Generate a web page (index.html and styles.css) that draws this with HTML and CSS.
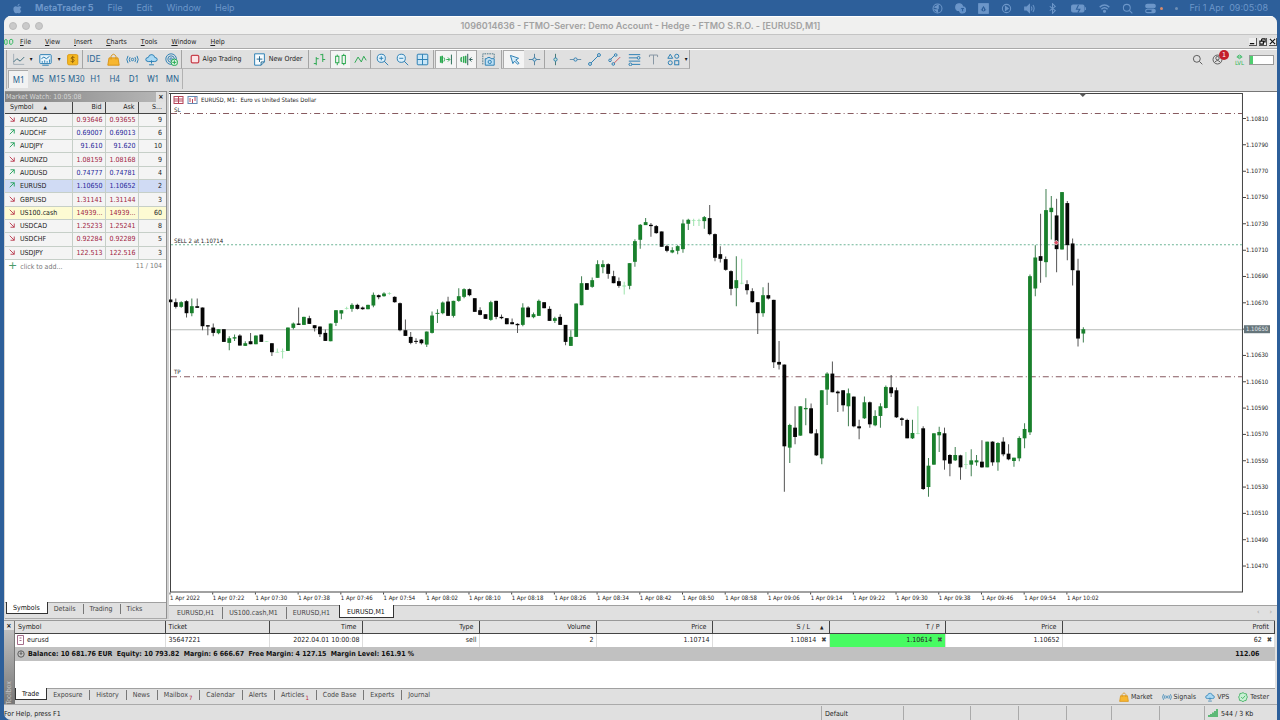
FILE: index.html
```html
<!DOCTYPE html>
<html lang="en">
<head>
<meta charset="utf-8">
<title>MetaTrader 5</title>
<link rel="stylesheet" href="styles.css">
</head>
<body>
<header class="macbar">
  <svg class="apple" viewBox="0 0 16 16"><path d="M11 1c0 2-1.400 3.200-3 3.200C8 2.500 9.500 1.200 11 1zM13.500 11.500c-1 2.500-2 3.500-3.200 3.500-.9 0-1.200-.5-2.300-.5s-1.500.5-2.300.5C4 15 2 11.500 2 8.700 2 6 3.700 4.700 5.300 4.700c1.100 0 2 .6 2.700.6s1.700-.7 3-.7c1 0 2 .5 2.600 1.400-2.300 1.400-2 4.500-.1 5.500z" fill="currentColor"/></svg>
  <nav class="macmenu"><b>MetaTrader 5</b><span>File</span><span>Edit</span><span>Window</span><span>Help</span></nav>
  <div class="macstatus">
    <svg viewBox="0 0 16 16" class="ic"><circle cx="8" cy="8" r="6.500"/><path d="M4 6l5-3v5zM4 10h4v3z" fill="currentColor"/></svg>
    <svg viewBox="0 0 16 16" class="ic"><circle cx="6" cy="6" r="5" fill="currentColor"/><circle cx="11" cy="10" r="4.500" fill="#5d8fca"/><path d="M9 8h4M11 8v4" stroke="#2d5f9a"/></svg>
    <svg viewBox="0 0 16 16" class="ic"><rect x="1" y="1" width="14" height="14" fill="currentColor"/><path d="M8 3l4 6a3.500 3.500 0 0 1-8 0z" fill="#2d5f9a"/><path d="M8 8v3" /></svg>
    <svg viewBox="0 0 16 16" class="ic"><circle cx="8" cy="8" r="6"/><path d="M6.500 5l4 3-4 3z" fill="currentColor"/></svg>
    <svg viewBox="0 0 16 16" class="ic"><path d="M1 6h3l4-4v12l-4-4H1z" fill="currentColor"/><path d="M10.500 5q2 3 0 6M13 3q3.500 5 0 10"/></svg>
    <svg viewBox="0 0 16 16" class="ic"><path d="M4 5l8 6-4 4V1l4 4-8 6"/></svg>
    <svg viewBox="0 0 24 16" class="ic batt"><rect x="2" y="3" width="18" height="10" rx="2" fill="currentColor"/><path d="M22 6v4"/><path d="M12 3l-3 6h5l-3 5" stroke="#2d5f9a"/></svg>
    <svg viewBox="0 0 16 16" class="ic"><path d="M1 6q7-6 14 0M3.500 9q4.500-4 9 0" stroke-width="2"/><circle cx="8" cy="12" r="1.500" fill="currentColor"/></svg>
    <svg viewBox="0 0 16 16" class="ic"><circle cx="7" cy="7" r="5"/><path d="M11 11l4 4"/></svg>
    <svg viewBox="0 0 16 16" class="ic"><rect x="1" y="2" width="14" height="5" rx="2.500" fill="currentColor"/><rect x="1" y="9" width="14" height="5" rx="2.500"/><circle cx="12" cy="11.500" r="2" fill="currentColor"/></svg>
    <i class="dot"></i><i class="dot dim"></i>
    <time>Fri 1 Apr&nbsp; 09:05:08</time>
  </div>
</header>
<div class="window">
  <div class="titlebar"><div class="lights"><i></i><i></i><i></i></div><h1>1096014636 - FTMO-Server: Demo Account - Hedge - FTMO S.R.O. - [EURUSD,M1]</h1></div>
  <nav class="menubar">
    <svg class="logo" viewBox="0 0 16 12"><path d="M1 3q2-2 4 0v6q-2 2-4 0zM9 3q2-3 5 0v4q-2 5-5 2z" fill="none" stroke="#2fb85c" stroke-width="1.500"/></svg>
    <button><u>F</u>ile</button><button><u>V</u>iew</button><button><u>I</u>nsert</button><button><u>C</u>harts</button><button><u>T</u>ools</button><button><u>W</u>indow</button><button><u>H</u>elp</button>
    <span class="wbtns"><button aria-label="Minimize"><svg viewBox="0 0 8 8"><path d="M1 6.500h5"/></svg></button><button aria-label="Restore"><svg viewBox="0 0 8 8"><path d="M3 1h4v3.500H5.500M3 1v2M1 3.500h4V7H1z"/></svg></button><button aria-label="Close"><svg viewBox="0 0 8 8"><path d="M1 1l6 6M7 1L1 7"/></svg></button></span>
  </nav>
  <div class="toolbar">
    <div class="grp g1">
      <button class="t20" aria-label="Chart type"><svg viewBox="0 0 16 16" class="i"><path d="M2 1v13h13" stroke="#a3afb8"/><path d="M2 11l4-4 4 3 5-5" stroke="#3f6d7c"/></svg></button><button class="car" aria-label="More">▾</button>
      <button class="t22" aria-label="Indicators"><svg viewBox="0 0 16 16" class="i"><rect x="1" y="2" width="14" height="11" rx="1" fill="#e6f3fb"/><path d="M3 7l3-2 3 2 4-3M4 10v2M7 9v3M10 10v2M13 8v4M4 15h8"/></svg></button><button class="car" aria-label="More">▾</button>
      <button class="t20" aria-label="Quotes"><svg viewBox="0 0 16 16" class="i"><rect x="2" y="2" width="12.500" height="12.500" rx="1.500" fill="#f5b921" stroke="#dc9a15"/><path d="M10.500 5.500q-4-1.500-4.200.8c0 2 4 1.200 3.800 3-.3 2-3 1.500-4.400.8M8.200 3.500v9" stroke="#94640a"/></svg></button>
    </div>
    <div class="grp g2">
      <button class="ide">IDE</button>
      <button aria-label="Market"><svg viewBox="0 0 16 16" class="i"><path d="M2.500 6h11L15 15H1z" fill="#f7b731" stroke="#d8941a"/><path d="M5 8V4q3-5 6 0v4" stroke="#d8941a"/></svg></button>
      <button aria-label="Signals"><svg viewBox="0 0 16 16" class="i"><circle cx="8" cy="8" r="1.500"/><path d="M5 5q-2 3 0 6M11 5q2 3 0 6M2.500 3.500q-3 4.500 0 9M13.500 3.500q3 4.500 0 9"/></svg></button>
      <button aria-label="VPS"><svg viewBox="0 0 16 16" class="i"><path d="M4 10.500Q1 10.500 1 8q0-2.500 3-2.500 1-4 4.500-3.500 3 .3 3.500 3.500 3 0 3 2.500t-3 2.500z" fill="#a9d8f3"/><path d="M8 9v4M5 14.500h6"/></svg></button>
      <button aria-label="Network"><svg viewBox="0 0 16 16" class="i"><circle cx="7.500" cy="7.500" r="6.500"/><circle cx="7.500" cy="7.500" r="4"/><circle cx="7.500" cy="7.500" r="1.500"/><circle cx="11.500" cy="11.500" r="4" fill="#e2f6e5" stroke="#22a850"/><path d="M11.500 9v5M9 11.500h5" stroke="#22a850"/></svg></button>
    </div>
    <div class="grp g3">
      <button class="lab"><svg viewBox="0 0 16 16" class="i s"><rect x="2" y="2" width="12" height="12" rx="2" fill="#fbe4e6" stroke="#c8404c" stroke-width="2"/></svg>Algo Trading</button>
      <button class="lab"><svg viewBox="0 0 16 16" class="i"><path d="M2 1h12v10l-4 4H2z" fill="#f6fbfe"/><path d="M8 4v7M4.500 7.500h7M14 11h-4v4" stroke="#22668e"/></svg>New Order</button>
    </div>
    <div class="grp g4">
      <button aria-label="Bars"><svg viewBox="0 0 16 16" class="i gr"><path d="M4 5v10M1 13h3M4 7h3M12 1v10M9 2h3M12 8h3"/></svg></button>
      <button class="on" aria-label="Candles"><svg viewBox="0 0 16 16" class="i gr"><rect x="2" y="4" width="4" height="8"/><rect x="10" y="3" width="4" height="10"/><path d="M4 2v2M4 12v3M12 1v2M12 13v2"/></svg></button>
      <button aria-label="Line"><svg viewBox="0 0 16 16" class="i gr"><path d="M1 12l4-7 4 6 3-7 3 5"/></svg></button>
    </div>
    <div class="grp g5">
      <button aria-label="Zoom in"><svg viewBox="0 0 16 16" class="i"><circle cx="6.500" cy="6.500" r="5" fill="#dff1fb"/><path d="M10 10l5 5M4 6.500h5M6.500 4v5"/></svg></button>
      <button aria-label="Zoom out"><svg viewBox="0 0 16 16" class="i"><circle cx="6.500" cy="6.500" r="5" fill="#dff1fb"/><path d="M10 10l5 5M4 6.500h5"/></svg></button>
      <button aria-label="Tile"><svg viewBox="0 0 16 16" class="i"><rect x="1.500" y="1.500" width="13" height="13" rx="1" fill="#c9e6f7"/><path d="M8 1.500v13M1.500 8h13"/></svg></button>
    </div>
    <div class="grp g6">
      <button class="on" aria-label="Auto scroll"><svg viewBox="0 0 16 16" class="i gr"><path d="M2 4v8M4 3.500v9" stroke-width="1.800"/><path d="M6 5.500q2 2.500 0 5M9 8h4M11 5.500L13.500 8 11 10.500"/><path d="M15.300 2v12" stroke="#2b6d58"/></svg></button>
      <button class="on" aria-label="Chart shift"><svg viewBox="0 0 16 16" class="i gr"><path d="M2 5q-1.500 3 0 6M4.500 4v8M7 3.500v9" stroke-width="1.800"/><path d="M9.500 1v14M15.500 8H12M14 5.500L11.500 8l2.500 2.500" stroke="#2b5d58"/></svg></button>
    </div>
    <div class="grp g7"><button aria-label="Screenshot"><svg viewBox="0 0 16 16" class="i"><path d="M1 14V1h14v5" stroke-dasharray="2 1" stroke="#4d7788"/><path d="M4 7h2l1-1.500h3L11 7h4v8H4z" fill="#bfe0f4"/><circle cx="9.500" cy="11" r="2"/></svg></button></div>
    <div class="grp g8">
      <button class="on" aria-label="Cursor"><svg viewBox="0 0 16 16" class="i"><path d="M3 3l10 3.500-3.500 2 4 4-1.500 1.500-4-4L6 13z" fill="#d7edf9"/></svg></button>
      <button aria-label="Crosshair"><svg viewBox="0 0 16 16" class="i"><path d="M8 1v14M1 8h14" stroke="#56839c"/><circle cx="8" cy="8" r="2" fill="#e0e0e0"/></svg></button>
    </div>
    <div class="grp g9">
      <button aria-label="Vertical line"><svg viewBox="0 0 16 16" class="i"><path d="M8 1v14" stroke="#477"/><circle cx="8" cy="8" r="2" fill="#cfe8cf"/></svg></button>
      <button aria-label="Horizontal line"><svg viewBox="0 0 16 16" class="i"><path d="M1 8h14" stroke="#6a8fa8"/><circle cx="8" cy="8" r="2" fill="#e0e0e0"/></svg></button>
      <button aria-label="Trend line"><svg viewBox="0 0 16 16" class="i"><path d="M3 13L13 3"/><circle cx="2.500" cy="13.500" r="1.800" fill="#e0e0e0"/><circle cx="13.500" cy="2.500" r="1.800" fill="#e0e0e0"/></svg></button>
      <button aria-label="Channel"><svg viewBox="0 0 16 16" class="i"><path d="M2 9L9 2"/><path d="M7 13l8-8" stroke="#d0585f"/><circle cx="2.500" cy="9" r="1.600" fill="#e0e0e0"/><circle cx="9.500" cy="2.500" r="1.600" fill="#e0e0e0"/><circle cx="6.500" cy="13.500" r="1.600" fill="#e0e0e0"/></svg></button>
      <button aria-label="Fibonacci"><svg viewBox="0 0 16 16" class="i"><path d="M1 2h14M1 6h14M1 10h14M1 14h14"/><circle cx="13" cy="6" r="1.700" fill="#e0e0e0"/><circle cx="3" cy="14" r="1.700" fill="#e0e0e0"/></svg></button>
      <button aria-label="Text"><svg viewBox="0 0 16 16" class="i"><path d="M3 5V2.500h10V5M8 2.500V14" stroke="#8695a2"/></svg></button>
      <button aria-label="Shapes"><svg viewBox="0 0 16 16" class="i"><path d="M4 1.500l3 5H1z"/><circle cx="12" cy="4" r="2.500"/><circle cx="4" cy="12" r="2.500"/><rect x="9.500" y="9.500" width="5" height="5"/></svg></button>
      <button class="car" aria-label="More">▾</button>
    </div>
    <div class="right">
      <button aria-label="Search"><svg viewBox="0 0 16 16" class="i bk"><circle cx="7" cy="7" r="5"/><path d="M11 11l4 4"/></svg></button>
      <button class="user" aria-label="Account"><svg viewBox="0 0 16 16" class="i bk"><circle cx="8" cy="8" r="6.500"/><circle cx="8" cy="6" r="2.500"/><path d="M4 12q4-5 8 0"/></svg><span class="badge">1</span></button>
      <span class="lvl"><svg viewBox="0 0 16 10"><path d="M3 5h10M5 3q3-3 6 0v3q-3 4-6 0z" fill="none" stroke="#2fb85c" stroke-width="1.500"/></svg>LVL</span>
      <span class="meter"></span>
    </div>
  </div>
  <div class="frames"><div class="tf"><button class="on">M1</button><button>M5</button><button>M15</button><button>M30</button><button>H1</button><button>H4</button><button>D1</button><button>W1</button><button>MN</button></div></div>
  <main class="work">
    <aside class="watch">
      <div class="wtitle"><span>Market Watch: 10:05:08</span><button aria-label="Close panel">×</button></div>
      <table class="quotes">
        <colgroup><col class="q1"><col class="q2"><col class="q2"><col></colgroup>
        <thead><tr><th>Symbol <span class="up">▲</span></th><th>Bid</th><th>Ask</th><th>S...</th></tr></thead>
        <tbody id="quotes"></tbody>
      </table>
      <div class="addrow"><span><b>+</b>click to add...</span><span>11 / 104</span></div>
      <nav class="tabs wtabs"><button class="sel">Symbols</button><button>Details</button><button>Trading</button><button>Ticks</button></nav>
    </aside>
    <section class="chartpane">
      <div class="chartbox"><svg id="chart" viewBox="0 1 1107 512" preserveAspectRatio="xMinYMin meet" role="img" aria-label="EURUSD M1 chart"></svg></div>
      <nav class="tabs ctabs"><button>EURUSD,H1</button><button>US100.cash,M1</button><button>EURUSD,H1</button><button class="sel">EURUSD,M1</button><span class="arrows"><i>‹</i><i>›</i></span></nav>
    </section>
  </main>
  <section class="toolbox">
    <div class="side"><button aria-label="Close toolbox">×</button><span>Toolbox</span></div>
    <div class="tbody">
      <table class="trade">
        <colgroup><col class="w150"><col class="w104"><col class="w93"><col class="w117"><col class="w117"><col class="w116"><col class="w117"><col class="w116"><col class="w117"><col></colgroup>
        <thead><tr><th>Symbol</th><th>Ticket</th><th>Time</th><th>Type</th><th>Volume</th><th>Price</th><th>S / L <span class="up">▲</span></th><th>T / P</th><th>Price</th><th>Profit</th></tr></thead>
        <tbody>
          <tr class="pos"><td><svg class="doc" viewBox="0 0 7 10"><path d="M.5.5h6v9h-6zM2.500 3h2M2.500 5.500h2" fill="#fff" stroke="#a56d8a"/></svg>eurusd</td><td>35647221</td><td>2022.04.01 10:00:08</td><td>sell</td><td>2</td><td>1.10714</td><td>1.10814<button class="x" aria-label="Remove stop loss">✖</button></td><td class="hit">1.10614<button class="x" aria-label="Remove take profit">✖</button></td><td>1.10652</td><td>62<button class="x" aria-label="Close position">✖</button></td></tr>
          <tr class="sum"><td colspan="9"><svg class="clock" viewBox="0 0 10 10"><circle cx="5" cy="5" r="4"/><path d="M5 2v3.500M3.500 4L5 5.500 6.500 4"/></svg>Balance: 10 681.76 EUR&nbsp; Equity: 10 793.82&nbsp; Margin: 6 666.67&nbsp; Free Margin: 4 127.15&nbsp; Margin Level: 161.91 %</td><td>112.06</td></tr>
        </tbody>
      </table>
      <nav class="tabs btabs"><button class="sel">Trade</button><button>Exposure</button><button>History</button><button>News</button><button>Mailbox<sub>7</sub></button><button>Calendar</button><button>Alerts</button><button>Articles<sub>1</sub></button><button>Code Base</button><button>Experts</button><button>Journal</button>
        <span class="links"><a href="#"><svg viewBox="0 0 16 16" class="i"><path d="M2.500 6h11L15 15H1z" fill="#f7b731" stroke="#d8941a"/><path d="M5 8V4q3-5 6 0v4" stroke="#d8941a"/></svg>Market</a><a href="#"><svg viewBox="0 0 16 16" class="i"><circle cx="8" cy="8" r="1.500"/><path d="M5 5q-2 3 0 6M11 5q2 3 0 6M2.500 3.500q-3 4.500 0 9M13.500 3.500q3 4.500 0 9"/></svg>Signals</a><a href="#"><svg viewBox="0 0 16 16" class="i"><path d="M4 10.500Q1 10.500 1 8q0-2.500 3-2.500 1-4 4.500-3.500 3 .3 3.500 3.500 3 0 3 2.500t-3 2.500z" fill="#a9d8f3"/><path d="M8 9v4M5 14.500h6"/></svg>VPS</a><a href="#"><svg viewBox="0 0 16 16" class="i gr"><path d="M8 1l2.500 1.500 3 .5.500 3L15 8l-1.500 3-.5 2.500-3 .5-2 1.500L5.500 14l-3-.5L2 10.500 1 8l1.500-2.500.5-3 3-.5z" fill="#c9f0d4"/><path d="M5 8l2.500 2.500L11.500 6"/></svg>Tester</a></span>
      </nav>
    </div>
  </section>
  <footer class="status"><span class="help">For Help, press F1</span><span class="s82">Default</span><span class="s67"></span><span class="s48"></span><span class="s48"></span><span class="s45"></span><span class="s48"></span><span class="s45"></span><span class="net"><svg viewBox="0 0 10 8"><path d="M1 6v2M3 5v3M5 3.500V8M7 2v6M9 0v8" stroke="#32ad54" stroke-width="1.500"/></svg>544 / 3 Kb</span></footer>
</div>
<script src="chart.js"></script>
</body>
</html>
```

FILE: styles.css
```css
* { box-sizing: border-box; }
html, body { height: 100%; }
body { margin: 0; background: #2d5f9a; color: #222; font: 7px/10px "DejaVu Sans Condensed", "DejaVu Sans", sans-serif; display: flex; flex-direction: column; overflow: hidden; }
.window, .quotes, .trade, button { font-family: "DejaVu Sans Condensed", "DejaVu Sans", sans-serif; }
button { border: 0; padding: 0; margin: 0; background: none; font-size: 7px; line-height: 10px; color: inherit; display: inline-flex; align-items: center; justify-content: center; }
svg { display: block; flex: none; }

.macbar { height: 16px; flex: none; display: flex; align-items: center; padding: 0 12px 0 12px; color: #6c96c9; font: 9px/16px Inter, sans-serif; }
.apple { width: 11px; height: 11px; margin-right: 12px; }
.macmenu { display: flex; gap: 14px; }
.macstatus { margin-left: auto; display: flex; align-items: center; gap: 12px; }
.ic { width: 11px; height: 11px; fill: none; stroke: currentColor; stroke-width: 1.5; }
.ic.batt { width: 17px; }
.dot { width: 3px; height: 3px; border-radius: 50%; background: #d98a6a; margin-left: -8px; }
.dot.dim { background: #6f8fb5; margin-left: 0; }

.window { flex: 1; min-height: 0; margin: 0 3px 0 4px; background: #e0e0e0; border-radius: 7px 7px 0 7px; overflow: hidden; display: flex; flex-direction: column; }
.titlebar { height: 19px; flex: none; background: #f0f0ef; border-top: 1px solid #fff; border-bottom: 1px solid #c4c4c4; display: flex; align-items: center; position: relative; }
.lights { position: absolute; left: 5px; display: flex; gap: 5px; }
.lights i { width: 8px; height: 8px; border-radius: 50%; background: #cacaca; border: 1px solid #bbb; }
.titlebar h1 { margin: 0; flex: 1; text-align: center; font: 600 9px/16px Inter, sans-serif; color: #a2a2a2; }
.menubar { height: 14px; flex: none; display: flex; align-items: center; gap: 14px; border-bottom: 1px solid #a9a9a9; }
.menubar u { text-underline-offset: 1px; }
.logo { width: 10px; height: 8px; margin-right: -8px; }
.wbtns { margin-left: auto; display: flex; gap: 2px; }
.wbtns button { width: 8px; height: 8px; border: solid #555; border-width: 0 1px 1px 0; background: #eee; }
.wbtns svg { width: 7px; height: 7px; fill: none; stroke: #111; stroke-width: 1.3; }

.toolbar { height: 20px; flex: none; display: flex; border-top: 1px solid #fff; color: #222; padding-left: 2px; }
.grp { display: flex; border-left: 1px solid #a4a4a4; border-bottom: 1px solid #b4b4b4; padding-left: 1px; flex: none; }
.grp button { flex: 1; }
.grp .t20, .grp .t22 { flex: 0 0 20px; }
.grp .t22 { flex-basis: 22px; }
.grp .car { flex: 0 0 6px; font-size: 6px; color: #111; }
.grp .lab { flex: 1 1 auto; gap: 3px; }
.grp .on { background: #f4f4f4; border: 1px solid #aaa; border-width: 1px 0 0 1px; }
.g1 { width: 76px; } .g2 { width: 99px; } .g3 { width: 127px; padding-left: 2px; } .g4 { width: 62px; } .g5 { width: 63px; }
.g6 { width: 43px; } .g7 { width: 23px; } .g8 { width: 43px; margin-left: 2px; } .g9 { width: 146px; border-right: 1px solid #a4a4a4; }
.grp .ide { color: #2b6796; font-size: 9px; }
.i { width: 13px; height: 13px; fill: none; stroke: #2c7fb4; stroke-width: 1.2; }
.i.s { width: 10px; height: 10px; }
.i.gr { stroke: #2aa84f; }
.i.bk { stroke: #444; width: 11px; height: 11px; }
.right { margin-left: auto; display: flex; align-items: center; gap: 9px; padding-right: 3px; }
.user { position: relative; }
.badge { position: absolute; left: 7px; top: -4px; width: 10px; height: 10px; border-radius: 50%; background: #c4202c; color: #fff; }
.lvl { display: flex; flex-direction: column; align-items: center; font-size: 6px; line-height: 5px; color: #2fb85c; margin-left: 3px; }
.lvl svg { width: 9px; height: 6px; }
.meter { width: 25px; height: 10px; border: 1px solid #999; background: linear-gradient(90deg, #4fcf70 3px, #fff 3px); margin-left: -4px; }
.frames { height: 22px; flex: none; padding-left: 2px; }
.tf { display: flex; width: 177px; height: 20px; padding: 1px 0 1px 1px; border: solid #b2b2b2; border-width: 0 1px; }
.tf button { flex: 1; font: 8px/10px "Noto Sans", sans-serif; color: #245f8e; }
.tf .on { background: #f2f2f2; border: 1px solid #aaa; border-width: 1px 0 0 1px; }

.work { flex: 1; min-height: 0; display: flex; gap: 2px; padding-left: 1px; background: #d2d2d2; }
.watch { width: 162px; flex: none; background: #fff; display: flex; flex-direction: column; border: solid #909090; border-width: 1px 1px 0 0; border-bottom: 1px solid #aaa; }
.wtitle { height: 10px; display: flex; justify-content: space-between; background: linear-gradient(90deg, #828282, #b8b8b8); color: #d8d8d8; padding-left: 1px; }
.wtitle button { width: 10px; background: #e0e0e0; color: #111; font-weight: bold; }
table { border-collapse: collapse; table-layout: fixed; width: 100%; flex: none; }
th { font-weight: normal; background: #e2e2e2; border: solid #444; border-width: 0 1px 1px 0; }
th, td { padding: 0 3px; white-space: nowrap; overflow: hidden; line-height: 10px; }
.up { font-size: 5px; margin-left: 8px; }
.quotes { font-size: 7px; height: 158px; }
.q1 { width: 67px; } .q2 { width: 33px; }
.quotes th { height: 11px; text-align: right; }
.quotes th:first-child { text-align: left; padding-left: 5px; }
.quotes td { text-align: right; border: 1px solid #c6cfc8; border-width: 0 1px 1px 0; background: #f4f4f4; padding-right: 2px; }
.quotes td:first-child { text-align: left; padding-left: 4px; }
.quotes td:last-child, .quotes th:last-child { border-right: 0; padding-right: 4px; }
.quotes td svg { display: inline-block; width: 6px; height: 6px; margin-right: 5px; fill: none; stroke-width: 1.2; }
.quotes .dn svg { stroke: #b8394c; } .quotes .upw svg { stroke: #1fa05a; }
.dn .p { color: #a01c42; } .upw .p { color: #26269a; }
.quotes .cur td { background: #d0dbf4; } .quotes .hot td { background: #fdfbd3; }
.addrow { display: flex; justify-content: space-between; padding: 1px 4px 0 3px; color: #777; }
.addrow b { color: #4a9a6a; margin-right: 3px; font: 11px/10px "DejaVu Sans", sans-serif; }
.tabs { display: flex; background: #e0e0e0; border-top: 1px solid #a0a0a0; color: #444; flex: none; height: 14px; }
.tabs button { padding: 0 7px 0 6px; height: 10px; border-right: 1px solid #777; color: #444; margin-top: 1px; }
.tabs .sel { background: #fff; border: 1px solid #333; border-top: 0; height: 12px; margin-top: -1px; color: #111; }
.tabs button:has(+ .sel), .tabs button:last-of-type { border-right-color: transparent; }
.tabs .sel:last-of-type { border-right-color: #333; }
.wtabs { margin-top: auto; padding-left: 1px; height: 16px; }
.chartpane { flex: 1; min-width: 0; display: flex; flex-direction: column; background: #fff; border-top: 1px solid #777; }
.chartbox { flex: 1; min-height: 0; }
.chartbox svg { width: 100%; height: 100%; }
#chart text { font: 6px "DejaVu Sans Condensed", "DejaVu Sans", sans-serif; fill: #222; }
#chart .inv { fill: #e5eaee; }
.ctabs { padding-left: 2px; }
.ctabs button { padding: 0 8px 0 6px; height: 12px; }
.ctabs .sel { padding: 1px 8px 0 7px; height: 13px; }
.arrows { margin-left: auto; display: flex; gap: 10px; padding: 1px 5px 0 0; color: #999; } .arrows i { font-style: normal; }

.toolbox { height: 84px; flex: none; display: flex; background: #e0e0e0; border-top: 1px solid #999; margin: 1px 2px 0 0; }
.side { width: 10px; flex: none; display: flex; flex-direction: column; background: linear-gradient(#c8c8c8, #777); color: #c4c4c4; justify-content: space-between; }
.side button { height: 9px; background: #e0e0e0; color: #111; font-weight: bold; }
.side span { writing-mode: vertical-rl; transform: rotate(180deg); }
.tbody { flex: 1; min-width: 0; display: flex; flex-direction: column; background: #fff; border-left: 1px solid #777; }
.trade { font-size: 7px; }
.w150 { width: 150px; } .w104 { width: 104px; } .w93 { width: 93px; } .w116 { width: 116px; } .w117 { width: 117px; }
.trade th { height: 12px; text-align: right; padding-right: 5px; }
.trade th:nth-child(-n+2), .trade td:nth-child(-n+2) { text-align: left; }
.trade td { height: 14px; text-align: right; border-right: 1px solid #ddd; padding-right: 2px; }
.trade .hit { background: #48fb62; }
.trade td:first-child { padding-left: 2px; }
.trade td svg { display: inline-block; margin-right: 3px; vertical-align: middle; }
.doc { width: 7px; height: 10px; }
.clock { width: 8px; height: 8px; fill: none; stroke: #444; }
.x { font-size: 7px; margin-left: 5px; color: #444; vertical-align: top; }
.trade .sum td { background: #c1c1c1; height: 14px; font-weight: bold; color: #111; border: 0; }
.trade .sum td:last-child { text-align: right; padding-right: 15px; }
.btabs { margin-top: auto; height: 16px; }
.btabs sub { font-size: 6px; color: #b8203a; line-height: 4px; margin: 5px 0 0 1px; }
.links { margin-left: auto; display: flex; gap: 9px; padding: 3px 6px 0 0; }
.links a { display: flex; gap: 2px; color: #333; text-decoration: none; align-items: center; height: 10px; }
.links .i { width: 10px; height: 10px; }
.status { height: 16px; flex: none; display: flex; border-top: 1px solid #aaa; padding: 1px 0 0; }
.status span { border-left: 1px solid #aaa; padding: 3px 0 0 3px; }
.status .help { flex: 1; border: 0; padding-left: 0; }
.s82 { width: 82px; } .s67 { width: 67px; } .s48 { width: 48px; } .s45 { width: 45px; }
.net { width: 73px; display: flex; gap: 3px; }
.net svg { width: 10px; height: 8px; }
```

FILE: chart.js
```js
// Market Watch rows: direction, symbol, bid, ask, spread, row class
const quotes = [
  ["dn", "AUDCAD", "0.93646", "0.93655", 9], ["upw", "AUDCHF", "0.69007", "0.69013", 6],
  ["upw", "AUDJPY", "91.610", "91.620", 10], ["dn", "AUDNZD", "1.08159", "1.08168", 9],
  ["upw", "AUDUSD", "0.74777", "0.74781", 4], ["upw", "EURUSD", "1.10650", "1.10652", 2, "cur"],
  ["dn", "GBPUSD", "1.31141", "1.31144", 3], ["dn", "US100.cash", "14939...", "14939...", 60, "hot"],
  ["dn", "USDCAD", "1.25233", "1.25241", 8], ["dn", "USDCHF", "0.92284", "0.92289", 5],
  ["dn", "USDJPY", "122.513", "122.516", 3]
];
document.getElementById("quotes").innerHTML = quotes.map(([d, s, b, a, sp, c = ""]) =>
  `<tr class="${d} ${c}"><td><svg viewBox="0 0 8 8"><path d="${d === "dn" ? "M1 1l6 6M7 2v5H2" : "M1 7l6-6M2 1h5v5"}"/></svg>${s}</td><td class="p">${b}</td><td class="p">${a}</td><td>${sp}</td></tr>`).join("");

// Candles: kind, body top, body bottom, wick top, wick bottom, in thirds of a unit below each block's base
const blocks = [
  [270, `k 88 96|k 96 110 85 115|g 96 110 93 113|k 93 129 90 142|g 108 129 85 138|k 108 113 85 113|k 112 168 112 180|k 165 169 165 195|k 172 188 160 198|g 177 189 177 192|k 177 215|g 204 218 198 240|g 201 205 193 212|k 196 226 192 226|g 219 227 213 227|k 213 222 188 222|g 196 222|k 193 215|l 213 215|k 219 246 219 257|l 245 247 235 247|l 243 245 235 265|g 172 242|g 160 173 157 178|k 160 164 112 164|g 140 164|k 144 161 137 161|k 165 174 165 184|k 169 192 169 200|k 188 212 178 212|g 160 213|g 120 158 120 167|g 120 130 120 147|l 114 116 110 118|g 104 116 99 125|k 104 116 101 118|k 112 117 109 119|g 104 117|g 74 106 67 111|k 75 81 73 87|g 70 78 66 80|l 69 71 66 74|k 80 96 78 98|k 99 180 97 183|k 180 197 148 197|k 200 218 185 222|k 212 215 204 221|k 208 219 206 223|g 184 223 184 230|g 136 188 124 190|g 128 131 117 158|g 97 129 94 132|k 94 137 80 137|g 92 137 92 142`],
  [190, `g 318 332 294 335|g 297 320 294 324|k 297 315 295 318|k 324 365|k 360 374 351 375|k 372 386|g 336 389 332 392|k 332 380 332 387|k 380 384 373 387|k 384 402|k 396 402 385 402|k 401 405 399 428|g 352 404 339 408|k 352 381 348 381|g 372 381 367 384|g 332 377 328 377|k 336 354|k 356 392 348 392|g 384 392 380 398|k 380 404 372 404|k 404 455 404 465|g 440 467 420 467|g 340 440|g 279 345 258 345|k 279 299|g 270 290 262 293|g 222 263 210 263|g 222 231 210 249|k 222 251 219 266|k 258 279 242 279|k 273 287 262 293|l 286 289 275 313|g 219 287 219 297|g 153 215 147 230|g 104 149 102 176|g 96 105 84 105|k 104 108 99 140|k 108 129 105 131|k 124 170|k 168 182 164 186|g 180 187 171 189|g 168 182 165 192|g 100 177 88 188|g 89 101 86 120|l 90 92 86 108|l 90 92 86 108|g 81 93 78 116|k 84 132 45 135|k 132 203 130 213|k 192 206 168 217|k 207 239 199 242|k 243 296 240 315`],
  [230, `g 150 174 78 228|l 158 160 86 162|k 162 180 150 193|k 183 216 174 218|k 216 249 216 311|g 195 249 171 260|k 195 205 158 208|k 209 396 209 413|k 395 403 332 418|k 403 648 403 784|g 584 652 580 698|k 592 620 528 642|g 528 616|g 533 537 504 585|k 534 609 520 611|k 609 675 597 677|g 480 684 480 702|g 430 478 426 524|k 430 486 394 486|k 484 489 481 545|k 480 525 480 544|g 489 528 475 588|k 499 588 499 591|k 588 594 568 627|g 516 564 499 566|k 516 582 514 592|g 557 585 540 588|g 528 557 519 592|g 470 533 466 535|k 471 489 434 500|k 480 561 472 563|k 564 569 561 586|k 569 624 565 624|g 608 624 568 626|l 609 611 528 612|k 594 776 588 779|g 706 770 683 799|g 609 703|g 605 615 589 665|k 609 690 592 718`],
  [180, `k 824 850 822 888|g 824 840 800 842|k 825 861 823 898|l 852 854 815 866|g 840 853 807 888|g 840 846 824 856|k 844 861 780 862|g 784 861|k 784 846 783 856|g 788 846 786 871|k 784 822 771 828|k 820 837 792 840|g 832 842 832 859|g 773 834 768 843|g 746 774 729 804|g 288 756 283 764|g 232 325 195 348|k 228 242 101 308|g 90 246 27 291|g 83 96 48 178|k 106 207 56 276|g 36 208|k 69 195 63 240|k 190 270 175 316|k 271 475 236 499|g 447 460 441 487`]
];
const fill = { k: "#050505", g: "#19802c", l: "#9be3ab" };
const wick = { k: "#555", g: "#3f7f50", l: "#9be3ab" };
const X = 169, Y = 91;
let out = `<path d="M0 2.500H1073M1.500 2V500.500M1 500.500H1073M1072.500 2V501" stroke="#444" fill="none"/>`;
out += `<path d="M2 22.500H1072M2 285.500H1072" stroke="#875a60" stroke-dasharray="6 3 1 3"/><path d="M2 153.500H1072" stroke="#6db596" stroke-dasharray="2 2"/>`;
out += `<path d="M2 238.500H1072" stroke="#b4b8b6"/>`;
let n = 0;
for (const [base, data] of blocks) {
  for (const c of data.split("|")) {
    const [k, ...v] = c.split(" ");
    const [t, b, h = t, l = b] = v.map(z => base - Y + z / 3);
    const x = 170.5 - X + n++ * 16 / 3;
    out += `<path d="M${x.toFixed(1)} ${h}V${l}" stroke="${wick[k]}"/><rect x="${(x - 1.9).toFixed(1)}" y="${t}" width="3.800" height="${b - t}" fill="${fill[k]}"/>`;
  }
}
out += `<path d="M909 2h8l-4 4z" fill="#555"/><path d="M886.500 149l2.500 2.500-2.500 2.500-2.500-2.500z" fill="#d84a60" stroke="#fff" stroke-width=".7"/>`;
for (let i = 0; i < 18; i++) {
  const y = 27.5 + i * 26.3;
  out += `<path d="M1073 ${y}h3" stroke="#444"/>`;
  if (i !== 8) out += `<text x="1076" y="${y + 2}">${(1.1081 - i * 0.0002).toFixed(5)}</text>`;
}
out += `<rect x="1074" y="234" width="26" height="8" fill="#65757b"/><text class="inv" x="1076" y="240">1.10650</text>`;
for (let i = 0; i < 22; i++) {
  const m = 434 + i * 8, x = 1 + i * 42.67;
  const label = i ? `${String(Math.floor(m / 60)).padStart(2, "0")}:${String(m % 60).padStart(2, "0")}` : "2022";
  out += `<path d="M${x} 501v2" stroke="#444"/><text x="${x}" y="509">1 Apr ${label}</text>`;
}
out += `<text x="32" y="11">EURUSD, M1:&#160; Euro vs United States Dollar</text><text x="5" y="21">SL</text><text x="5" y="152">SELL 2 at 1.10714</text><text x="5" y="283">TP</text>`;
out += `<g fill="#fff" stroke="#b6465a"><rect x="5" y="5.500" width="9" height="7"/><path d="M5 8h9M5 10h9M9.500 6v6" /><rect x="19" y="5.500" width="9" height="7" stroke="#668bb5"/><path d="M21 11V7M23.500 12V8M26 10V6"/></g>`;
document.getElementById("chart").innerHTML = out;
```
